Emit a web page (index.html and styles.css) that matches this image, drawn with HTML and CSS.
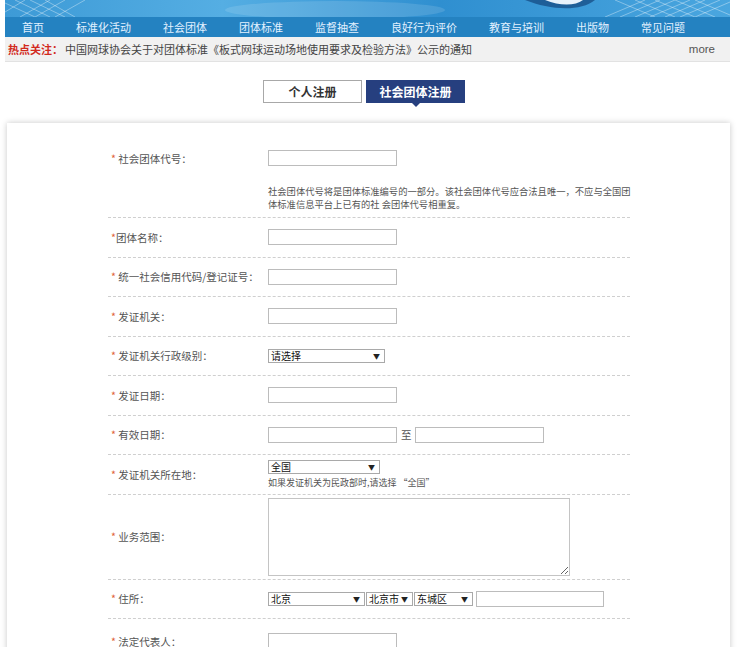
FILE: index.html
```html
<!DOCTYPE html>
<html lang="zh-CN">
<head>
    <meta charset="UTF-8" />
    <title>社会团体注册</title>
    <link rel="stylesheet" href="styles.css">
</head>
<body>

<div class="header">
    <div class="banner">
        <svg width="725" height="17" viewBox="0 0 725 17">
            <g stroke="#ffffff" stroke-opacity="0.45" stroke-width="0.8" fill="none">
                <path d="M0 3 L30 17 M10 0 L45 17 M25 0 L60 17 M40 0 L70 17 M0 12 L20 0 M15 17 L45 0 M30 17 L60 0 M50 17 L80 0"/>
                <path d="M600 17 L640 0 M615 17 L655 0 M630 17 L670 0 M645 17 L685 0 M660 17 L700 0 M675 17 L715 0 M690 17 L725 2"/>
                <path d="M610 0 L650 17 M630 0 L670 17 M650 0 L690 17 M670 0 L710 17 M690 0 L725 15"/>
            </g>
            <ellipse cx="330" cy="10" rx="110" ry="9" fill="#ffffff" fill-opacity="0.12"/>
            <path d="M520 0 C545 10 575 12 590 0 Z" fill="#12467e" fill-opacity="0.7"/>
            <path d="M540 0 C555 6 570 6 578 0 Z" fill="#e8f2fb"/>
        </svg>
    </div>
    <ul class="nav">
        <li>首页</li>
        <li>标准化活动</li>
        <li>社会团体</li>
        <li>团体标准</li>
        <li>监督抽查</li>
        <li>良好行为评价</li>
        <li>教育与培训</li>
        <li>出版物</li>
        <li>常见问题</li>
    </ul>
    <div class="news">
        <span class="news-title">热点关注：</span>
        <span class="news-text">中国网球协会关于对团体标准《板式网球运动场地使用要求及检验方法》公示的通知</span>
        <span class="more">more</span>
    </div>
</div>

<div class="tabs">
    <div class="tab">个人注册</div>
    <div class="tab active">社会团体注册</div>
</div>

<div class="card">
    <div class="form">
        <div class="row first">
            <div class="line">
                <label class="label"><em>*</em> 社会团体代号：</label>
                <input class="text" type="text">
            </div>
            <p class="hint big">社会团体代号将是团体标准编号的一部分。该社会团体代号应合法且唯一，不应与全国团<br>体标准信息平台上已有的社 会团体代号相重复。</p>
        </div>

        <div class="row">
            <label class="label"><em>*</em>团体名称：</label>
            <input class="text" type="text">
        </div>

        <div class="row">
            <label class="label"><em>*</em> 统一社会信用代码/登记证号：</label>
            <input class="text" type="text">
        </div>

        <div class="row">
            <label class="label"><em>*</em> 发证机关：</label>
            <input class="text" type="text">
        </div>

        <div class="row">
            <label class="label"><em>*</em> 发证机关行政级别：</label>
            <div class="select w117"><span>请选择</span><i>▼</i></div>
        </div>

        <div class="row">
            <label class="label"><em>*</em> 发证日期：</label>
            <input class="text" type="text">
        </div>

        <div class="row">
            <label class="label"><em>*</em> 有效日期：</label>
            <input class="text" type="text">
            <span class="to">至</span>
            <input class="text" type="text">
        </div>

        <div class="row">
            <label class="label"><em>*</em> 发证机关所在地：</label>
            <div class="stack">
                <div class="select w112"><span>全国</span><i>▼</i></div>
                <p class="hint">如果发证机关为民政部时,请选择 “全国”</p>
            </div>
        </div>

        <div class="row tall">
            <label class="label"><em>*</em> 业务范围：</label>
            <textarea class="area"></textarea>
        </div>

        <div class="row">
            <label class="label"><em>*</em> 住所：</label>
            <div class="select w97"><span>北京</span><i>▼</i></div>
            <div class="select w46"><span>北京市</span><i>▼</i></div>
            <div class="select w59"><span>东城区</span><i>▼</i></div>
            <input class="text addr" type="text">
        </div>

        <div class="row last">
            <label class="label"><em>*</em> 法定代表人：</label>
            <input class="text" type="text">
        </div>
    </div>
</div>

</body>
</html>
```

FILE: styles.css
```css
body {
    margin: 0;
    padding: 0;
    background-color: #ffffff;
    font-family: "Noto Sans CJK SC", "Liberation Sans", sans-serif;
    color: #333;
}

.header {
    margin-left: 5px;
    width: 725px;
}

.banner {
    height: 17px;
    background: linear-gradient(90deg, #3d9ad6 0%, #55aee3 30%, #2f8fd0 60%, #4aa6df 100%);
    overflow: hidden;
}

.banner svg {
    display: block;
}

.nav {
    list-style: none;
    margin: 0;
    padding: 0 0 0 17px;
    height: 20px;
    display: flex;
    gap: 32px;
    align-items: center;
    background-color: #2482c1;
}

.nav li {
    font-size: 11px;
    line-height: 20px;
    color: #e2f1ff;
}

.news {
    height: 25px;
    display: flex;
    align-items: center;
    background-color: #f1f1f1;
    border-bottom: 1px solid #e2e2e2;
    box-sizing: border-box;
    padding-left: 3px;
    font-size: 11px;
}

.news-title {
    color: #d22a1e;
    font-weight: bold;
    width: 57px;
}

.news-text {
    color: #444;
}

.more {
    margin-left: auto;
    margin-right: 15px;
    font-family: "Liberation Sans", Arial, sans-serif;
    font-size: 11.5px;
    color: #555;
}

.tabs {
    display: flex;
    gap: 4px;
    padding-left: 263px;
    margin-top: 18px;
}

.tab {
    width: 99px;
    height: 23px;
    box-sizing: border-box;
    border: 1px solid #a8a8a8;
    text-align: center;
    line-height: 21px;
    font-size: 12px;
    font-weight: bold;
    color: #333;
    position: relative;
}

.tab.active {
    background-color: #263f7f;
    border-color: #263f7f;
    color: #ffffff;
}

.tab.active::after {
    content: "";
    position: absolute;
    left: 44px;
    bottom: -5px;
    border-left: 5px solid transparent;
    border-right: 5px solid transparent;
    border-top: 5px solid #263f7f;
}

.card {
    margin: 20px 0 0 7px;
    width: 723px;
    min-height: 560px;
    background-color: #ffffff;
    box-shadow: 0 0 6px rgba(0, 0, 0, 0.22);
}

.form {
    margin-left: 101px;
    width: 522px;
}

.row {
    display: flex;
    align-items: center;
    height: 38.5px;
    border-bottom: 1px dashed #cfcfcf;
}

.row.first {
    display: block;
    height: auto;
    padding: 27px 0 6px;
}

.row.tall {
    height: auto;
    padding: 3px 0;
}

.row.last {
    border-bottom: none;
    height: 44px;
}

.line {
    display: flex;
    align-items: center;
}

.label {
    width: 157px;
    padding-left: 3px;
    font-size: 10.5px;
    color: #555;
    white-space: nowrap;
}

.label em {
    font-style: normal;
    color: #e0603a;
}

.text {
    width: 129px;
    height: 16px;
    box-sizing: border-box;
    border: 1px solid #bcbcbc;
    padding: 0 3px;
    margin: 0;
    font-size: 10px;
}

.text.addr {
    width: 128px;
    margin-left: 3px;
}

.to {
    font-size: 10.5px;
    color: #555;
    margin: 0 3px 0 4px;
}

.hint {
    margin: 0;
    font-size: 9px;
    line-height: 12px;
    color: #555;
    white-space: nowrap;
}

.hint.big {
    margin: 19px 0 0 160px;
    font-size: 9.3px;
    line-height: 13px;
}

.stack {
    display: flex;
    flex-direction: column;
    gap: 3px;
}

.select {
    height: 14px;
    box-sizing: border-box;
    border: 1px solid #a9a9a9;
    background-color: #ffffff;
    display: flex;
    align-items: center;
    justify-content: space-between;
    padding: 0 4px 0 2px;
    font-size: 10px;
    color: #111;
}

.select i {
    font-style: normal;
    font-size: 7px;
    color: #222;
}

.w117 { width: 117px; }
.w112 { width: 112px; }
.w97 { width: 97px; }
.w46 { width: 47px; margin-left: 1px; }
.w59 { width: 59px; margin-left: 1px; }

.area {
    width: 302px;
    height: 78px;
    box-sizing: border-box;
    border: 1px solid #c4c4c4;
    margin: 0;
    display: block;
}
```
